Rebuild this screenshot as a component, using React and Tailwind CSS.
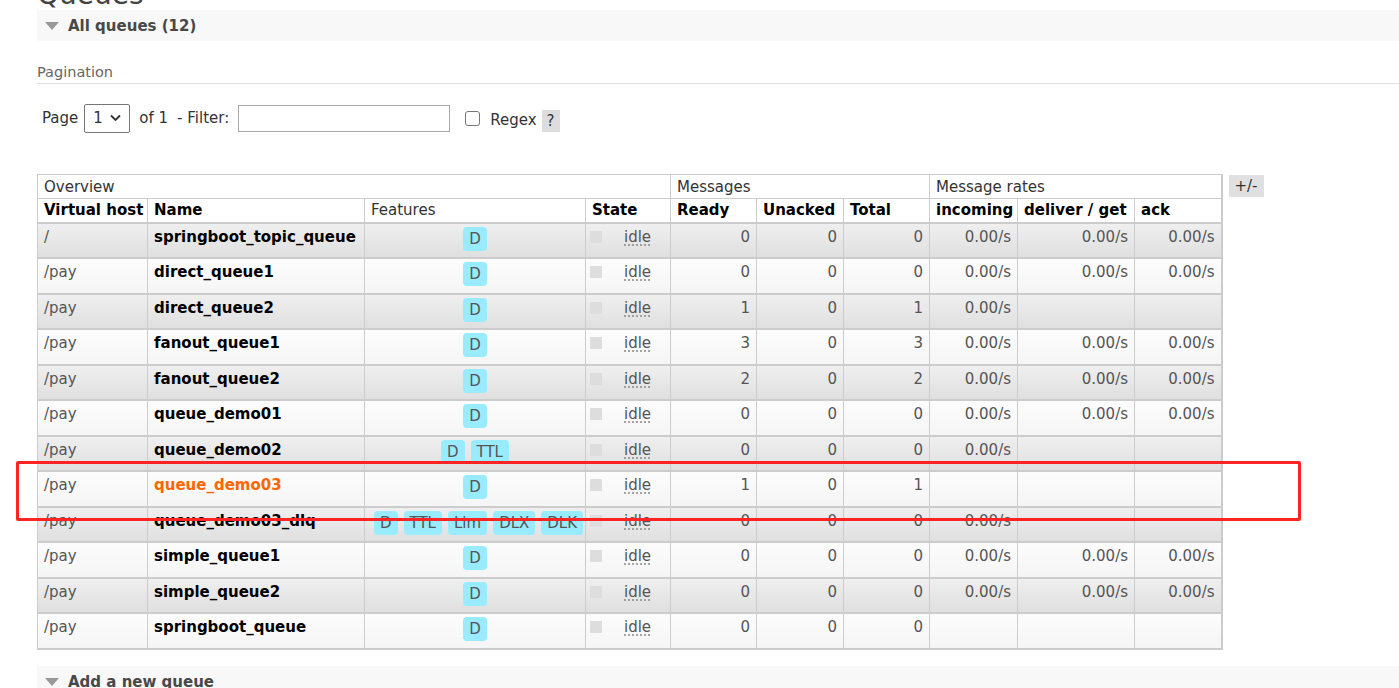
import React from 'react';

const queues = [
  { vhost: '/', name: 'springboot_topic_queue', features: ['D'], ready: 0, unacked: 0, total: 0, rates: ['0.00/s', '0.00/s', '0.00/s'] },
  { vhost: '/pay', name: 'direct_queue1', features: ['D'], ready: 0, unacked: 0, total: 0, rates: ['0.00/s', '0.00/s', '0.00/s'] },
  { vhost: '/pay', name: 'direct_queue2', features: ['D'], ready: 1, unacked: 0, total: 1, rates: ['0.00/s', '', ''] },
  { vhost: '/pay', name: 'fanout_queue1', features: ['D'], ready: 3, unacked: 0, total: 3, rates: ['0.00/s', '0.00/s', '0.00/s'] },
  { vhost: '/pay', name: 'fanout_queue2', features: ['D'], ready: 2, unacked: 0, total: 2, rates: ['0.00/s', '0.00/s', '0.00/s'] },
  { vhost: '/pay', name: 'queue_demo01', features: ['D'], ready: 0, unacked: 0, total: 0, rates: ['0.00/s', '0.00/s', '0.00/s'] },
  { vhost: '/pay', name: 'queue_demo02', features: ['D', 'TTL'], ready: 0, unacked: 0, total: 0, rates: ['0.00/s', '', ''] },
  { vhost: '/pay', name: 'queue_demo03', features: ['D'], ready: 1, unacked: 0, total: 1, rates: ['', '', ''], hover: true },
  { vhost: '/pay', name: 'queue_demo03_dlq', features: ['D', 'TTL', 'Lim', 'DLX', 'DLK'], ready: 0, unacked: 0, total: 0, rates: ['0.00/s', '', ''] },
  { vhost: '/pay', name: 'simple_queue1', features: ['D'], ready: 0, unacked: 0, total: 0, rates: ['0.00/s', '0.00/s', '0.00/s'] },
  { vhost: '/pay', name: 'simple_queue2', features: ['D'], ready: 0, unacked: 0, total: 0, rates: ['0.00/s', '0.00/s', '0.00/s'] },
  { vhost: '/pay', name: 'springboot_queue', features: ['D'], ready: 0, unacked: 0, total: 0, rates: ['', '', ''] },
];

function SectionBar({ title }) {
  return (
    <div className="flex items-center h-[31px] bg-[#f8f8f8] pl-[8px]">
      {/* little grey triangle */}
      <span className="w-0 h-0 border-l-[7px] border-r-[7px] border-t-[8px] border-l-transparent border-r-transparent border-t-[#999] mr-[9px] mt-[1px]" />
      <span className="font-bold text-[15px] text-[#484848] mt-[2px]">{title}</span>
    </div>
  );
}

function Pill({ label }) {
  return (
    <span className="inline-block h-[24px] leading-[24px] px-[6px] mx-[3px] rounded-[4px] bg-[#99ebff] text-[#555] text-[15px]">
      {label}
    </span>
  );
}

export default function App() {
  const th = 'border border-[#ccc] text-left px-[6px] h-[24px] leading-[22px] text-[15px] whitespace-nowrap';
  const td = 'border-x border-[#ccc] align-top pt-[3px] px-[6px] leading-[20px]';

  return (
    <div className="relative min-h-screen bg-white text-[#484848] text-[15px] overflow-hidden" style={{ fontFamily: '"DejaVu Sans", Verdana, sans-serif' }}>
      <div className="pl-[37px]">
        <div className="text-[28px] leading-[30px] -mt-[20px] mb-[0px] text-[#444]">Queues</div>
        <SectionBar title="All queues (12)" />

        <div className="mt-[21px] text-[14.5px] leading-[20px] text-[#666] pb-[1px] border-b border-[#ddd]">Pagination</div>

        <div className="flex items-center mt-[19px] pl-[5px] h-[30px] text-[15px] text-[#333]">
          <span>Page</span>
          <div className="ml-[6px] w-[46px] h-[29px] border border-[#767676] rounded-[2px] flex items-center justify-between px-[8px] bg-white">
            <span>1</span>
            <svg width="11" height="8" viewBox="0 0 11 8"><path d="M1 1.5 L5.5 6 L10 1.5" stroke="#333" strokeWidth="1.8" fill="none" /></svg>
          </div>
          <span className="ml-[9px]">of 1</span>
          <span className="ml-[9px]">- Filter:</span>
          <div className="ml-[9px] w-[212px] h-[27px] border border-[#aaa] bg-white" />
          <span className="ml-[15px] w-[15px] h-[15px] border border-[#777] rounded-[3px] bg-white" />
          <span className="ml-[10px] mt-[4px]">Regex</span>
          <span className="ml-[5px] mt-[6px] w-[18px] h-[22px] bg-[#ddd] flex items-center justify-center">?</span>
        </div>

        <div className="flex items-start mt-[41px]">
          <table className="table-fixed border-collapse w-[1184px] border-b-2 border-r-2 border-[#ccc]">
            <colgroup>
              <col className="w-[110px]" />
              <col className="w-[217px]" />
              <col className="w-[221px]" />
              <col className="w-[85px]" />
              <col className="w-[86px]" />
              <col className="w-[87px]" />
              <col className="w-[86px]" />
              <col className="w-[88px]" />
              <col className="w-[117px]" />
              <col className="w-[87px]" />
            </colgroup>
            <thead>
              <tr className="text-[#333]">
                <th colSpan={4} className={th + ' font-normal'}>Overview</th>
                <th colSpan={3} className={th + ' font-normal'}>Messages</th>
                <th colSpan={3} className={th + ' font-normal'}>Message rates</th>
              </tr>
              <tr className="text-black border-b-2 border-[#ccc]">
                <th className={th + ' pr-0'}>Virtual host</th>
                <th className={th}>Name</th>
                <th className={th + ' font-normal text-[#333]'}>Features</th>
                <th className={th}>State</th>
                <th className={th}>Ready</th>
                <th className={th}>Unacked</th>
                <th className={th}>Total</th>
                <th className={th}>incoming</th>
                <th className={th}>deliver / get</th>
                <th className={th}>ack</th>
              </tr>
            </thead>
            <tbody>
              {queues.map((q, i) => {
                const bg = i % 2 === 0 ? 'bg-linear-to-b from-[#efefef] to-[#dfdfdf]' : 'bg-linear-to-b from-[#fcfcfc] to-[#f5f5f5]';
                return (
                  <tr key={q.name} className={(i % 2 === 0 ? 'h-[35px]' : 'h-[36px]') + ' border-b-2 border-[#ccc]'}>
                    <td className={`${td} ${bg} text-[#555]`}>{q.vhost}</td>
                    <td className={`${td} ${bg} font-bold whitespace-nowrap ${q.hover ? 'text-[#f60]' : 'text-black'}`}>{q.name}</td>
                    <td className={`${td} ${bg} text-center whitespace-nowrap`}>
                      {q.features.map((f) => (
                        <Pill key={f} label={f} />
                      ))}
                    </td>
                    <td className={`${td} ${bg} pl-[4px]`}>
                      <div className="flex items-center">
                        <span className="w-[12px] h-[12px] bg-[#ddd] mt-[1px]" />
                        <span className="ml-[22px] text-[#555] underline decoration-dotted decoration-[#888] underline-offset-[3px]">idle</span>
                      </div>
                    </td>
                    <td className={`${td} ${bg} text-right text-[#555]`}>{q.ready}</td>
                    <td className={`${td} ${bg} text-right text-[#555]`}>{q.unacked}</td>
                    <td className={`${td} ${bg} text-right text-[#555]`}>{q.total}</td>
                    {q.rates.map((r, j) => (
                      <td key={j} className={`${td} ${bg} text-right text-[#555]`}>{r}</td>
                    ))}
                  </tr>
                );
              })}
            </tbody>
          </table>
          <div className="ml-[6px] mt-[1px] w-[35px] h-[22px] bg-[#e0e0e0] flex items-center justify-center text-[#333]">+/-</div>
        </div>

        <div className="mt-[16px]">
          <SectionBar title="Add a new queue" />
        </div>
      </div>

      {/* red annotation box drawn over the table */}
      <div className="absolute left-[16px] top-[461px] w-[1285px] h-[60px] border-[3px] border-[#ff2424] rounded-[2px] pointer-events-none" />
    </div>
  );
}
